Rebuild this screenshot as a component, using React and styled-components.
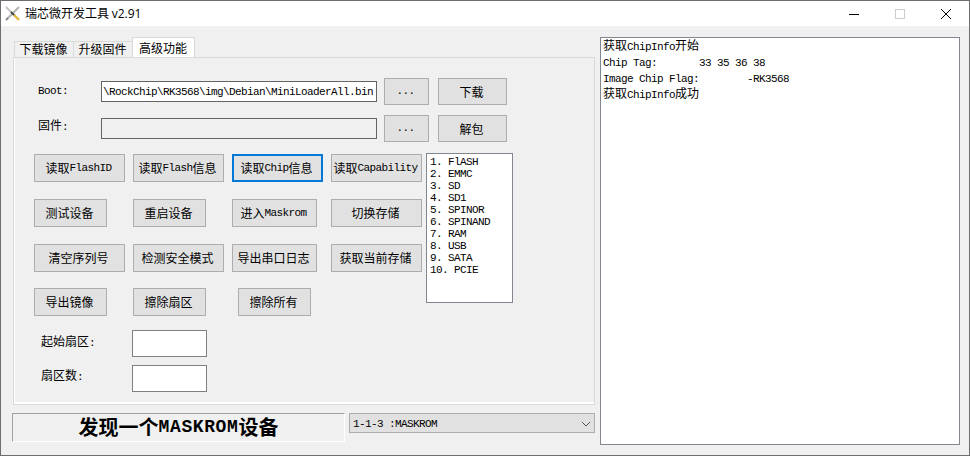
import styled, { createGlobalStyle } from "styled-components";

const GlobalStyle = createGlobalStyle`
    html, body {
        margin: 0;
        padding: 0;
        background: #f0f0f0;
    }
    body {
        font-family: "Noto Sans CJK SC", sans-serif;
        font-size: 12px;
        color: #000;
    }
`;

const latinFont = `"Liberation Mono", "Noto Sans CJK SC", monospace`;

const Window = styled.div`
    width: 970px;
    height: 456px;
    box-sizing: border-box;
    border: 1px solid #6e6e6e;
    display: flex;
    flex-direction: column;
    background: #f0f0f0;
    overflow: hidden;
`;

const TitleBar = styled.header`
    height: 25px;
    flex: none;
    background: #fff;
    display: flex;
    align-items: center;
    padding-left: 3px;
`;

const AppIcon = styled.svg`
    width: 17px;
    height: 17px;
    flex: none;
`;

const TitleText = styled.span`
    margin-left: 4px;
    line-height: 16px;
    white-space: pre;
`;

const Version = styled.span`
    font-family: "Open Sans", "Noto Sans", sans-serif;
    font-size: 12px;
`;

const WindowControls = styled.div`
    margin-left: auto;
    display: flex;
    height: 25px;
    padding-right: 17px;
    gap: 34px;
    align-items: center;
`;

const ControlIcon = styled.svg`
    width: 12px;
    height: 12px;
    display: block;
`;

const Body = styled.div`
    flex: 1;
    display: flex;
    padding: 11px 0 0 11px;
    min-height: 0;
`;

const LeftColumn = styled.div`
    width: 583px;
    flex: none;
    display: flex;
    flex-direction: column;
`;

const TabBar = styled.div`
    height: 20px;
    flex: none;
    display: flex;
    align-items: flex-end;
    padding-left: 2px;
`;

const Tab = styled.div`
    box-sizing: border-box;
    width: ${(p) => (p.$active ? 63 : 60)}px;
    height: ${(p) => (p.$active ? 20 : 16)}px;
    margin-left: ${(p) => (p.$first ? 0 : -1)}px;
    padding: 0 1px ${(p) => (p.$active ? 0 : 2)}px 0;
    background: ${(p) => (p.$active ? "#fff" : "#f0f0f0")};
    border: 1px solid #d9d9d9;
    border-bottom: none;
    display: flex;
    align-items: center;
    justify-content: center;
    line-height: 14px;
`;

const Panel = styled.section`
    box-sizing: border-box;
    width: 582px;
    height: 348px;
    margin-left: 1px;
    flex: none;
    border: 1px solid #d9d9d9;
    box-shadow: inset 1px 0 0 #fff, inset 0 -2px 0 #fff;
    padding-top: 20px;
`;

const FormRow = styled.div`
    display: flex;
    align-items: center;
    height: 27px;
    padding-left: 24px;
    margin-top: ${(p) => p.$top || 0}px;
`;

const FieldLabel = styled.label`
    width: 63px;
    flex: none;
    line-height: 16px;
    margin-top: ${(p) => (p.$cjk ? -7 : -5)}px;
`;

const PathInput = styled.input`
    box-sizing: border-box;
    width: 276px;
    height: 21px;
    padding: 0 1px;
    border: 1px solid #646464;
    border-radius: 0;
    outline: none;
    font-family: ${latinFont};
    font-size: 11px;
    letter-spacing: -0.6px;
    color: #000;
    background: ${(p) => (p.disabled ? "#f0f0f0" : "#fff")};
`;

const Button = styled.button`
    box-sizing: border-box;
    width: ${(p) => p.$w}px;
    height: ${(p) => p.$h || 28}px;
    margin-left: ${(p) => p.$left || 0}px;
    padding: 0 2px 0 0;
    flex: none;
    background: #e1e1e1;
    border: ${(p) => (p.$focused ? "2px solid #0078d7" : "1px solid #adadad")};
    border-radius: 0;
    font-family: inherit;
    font-size: 12px;
    line-height: 14px;
    color: #000;
    white-space: pre;
    display: flex;
    align-items: center;
    justify-content: center;
`;

const ActionGrid = styled.div`
    display: grid;
    grid-template-columns: 99px 99px 99px 95px 87px;
    grid-template-rows: 45px 45px 44px 28px;
    margin: 12px 0 0 20px;
    justify-items: start;
    align-items: start;
`;

const StorageList = styled.div`
    grid-column: 5;
    grid-row: 1 / span 4;
    box-sizing: border-box;
    width: 87px;
    height: 150px;
    margin-top: -1px;
    padding: 2px 3px 0;
    background: #fff;
    border: 1px solid #82878f;
    font-family: ${latinFont};
    font-size: 11px;
    letter-spacing: -0.6px;
    line-height: 12px;
    white-space: pre;
`;

const SectorRows = styled.div`
    margin-top: 14px;
    padding-left: 27px;
    display: flex;
    flex-direction: column;
    gap: 8px;
`;

const SectorRow = styled.div`
    display: flex;
    align-items: center;
    height: 27px;
`;

const SectorLabel = styled.label`
    width: 91px;
    flex: none;
    line-height: 16px;
    margin-top: ${(p) => (p.$up ? -7 : -5)}px;
`;

const SectorInput = styled.input`
    box-sizing: border-box;
    width: 75px;
    height: 27px;
    padding: 0 2px;
    border: 1px solid #808080;
    border-radius: 0;
    outline: none;
    background: #fff;
`;

const StatusRow = styled.div`
    display: flex;
    margin-top: 8px;
    align-items: flex-start;
`;

const StatusBox = styled.div`
    box-sizing: border-box;
    width: 333px;
    height: 29px;
    flex: none;
    padding-bottom: 2px;
    border-top: 1px solid #a0a0a0;
    border-left: 1px solid #a0a0a0;
    border-right: 1px solid #fff;
    border-bottom: 1px solid #fff;
    display: flex;
    align-items: center;
    justify-content: center;
    font-size: 20px;
    font-weight: 700;
    line-height: 24px;
    white-space: pre;
`;

const StatusLatin = styled.span`
    font-family: ${latinFont};
    font-size: 18px;
    font-weight: 700;
    letter-spacing: 0.6px;
    line-height: 1;
`;

const Combo = styled.div`
    box-sizing: border-box;
    width: 246px;
    height: 20px;
    margin-left: 4px;
    flex: none;
    background: #e1e1e1;
    border: 1px solid #adadad;
    display: flex;
    align-items: center;
    justify-content: space-between;
    padding: 1px 3px 0;
    font-family: ${latinFont};
    font-size: 11px;
    letter-spacing: -0.6px;
    white-space: pre;
`;

const Chevron = styled.svg`
    width: 10px;
    height: 6px;
    flex: none;
`;

const Memo = styled.div`
    box-sizing: border-box;
    width: 360px;
    height: 408px;
    margin-left: 5px;
    flex: none;
    background: #fff;
    border: 1px solid #82878f;
    padding: 0 2px;
    white-space: pre;
`;

const MemoLine = styled.div`
    height: 16px;
    line-height: 13px;
`;

const Latin = styled.span`
    font-family: ${latinFont};
    font-size: 11px;
    letter-spacing: -0.6px;
    line-height: 1;
`;

// SimSun-style runs: ascii goes half width, everything else stays 12px
function Mixed({ children }) {
    return children
        .split(/([\x00-\x7f]+)/)
        .filter(Boolean)
        .map((run, i) =>
            /^[\x00-\x7f]/.test(run) ? <Latin key={i}>{run}</Latin> : run
        );
}

const actions = [
    { label: "读取FlashID", w: 91 },
    { label: "读取Flash信息", w: 91 },
    { label: "读取Chip信息", w: 91, focused: true },
    { label: "读取Capability", w: 91 },
    { label: "测试设备", w: 73 },
    { label: "重启设备", w: 73 },
    { label: "进入Maskrom", w: 85 },
    { label: "切换存储", w: 91 },
    { label: "清空序列号", w: 91 },
    { label: "检测安全模式", w: 91 },
    { label: "导出串口日志", w: 85 },
    { label: "获取当前存储", w: 91 },
    { label: "导出镜像", w: 73 },
    { label: "擦除扇区", w: 73 },
    { label: "擦除所有", w: 73, left: 6 },
];

const storages = [
    "1. FlASH",
    "2. EMMC",
    "3. SD",
    "4. SD1",
    "5. SPINOR",
    "6. SPINAND",
    "7. RAM",
    "8. USB",
    "9. SATA",
    "10. PCIE",
];

const logLines = [
    "获取ChipInfo开始",
    "Chip Tag:       33 35 36 38",
    "Image Chip Flag:        -RK3568",
    "获取ChipInfo成功",
];

export default function App() {
    return (
        <>
            <GlobalStyle />
            <Window>
                <TitleBar>
                    <AppIcon viewBox="0 0 17 17">
                        <path d="M2 2 L8 8" stroke="#c4c4c4" strokeWidth="2" />
                        <path d="M15 2 L3 14" stroke="#b4b4b4" strokeWidth="2" />
                        <path d="M2 15 L4 13" stroke="#8a8a8a" strokeWidth="2" />
                        <path d="M7 7 L11 11" stroke="#4a4a4a" strokeWidth="2" />
                        <path d="M10 10 L15 15" stroke="#e2b93b" strokeWidth="2.4" />
                    </AppIcon>
                    <TitleText>
                        瑞芯微开发工具 <Version>v2.91</Version>
                    </TitleText>
                    <WindowControls>
                        <ControlIcon viewBox="0 0 12 12">
                            <path d="M1 6.5 H11" stroke="#000" fill="none" />
                        </ControlIcon>
                        <ControlIcon viewBox="0 0 12 12">
                            <rect x="1.5" y="1.5" width="9" height="9" stroke="#cccccc" fill="none" />
                        </ControlIcon>
                        <ControlIcon viewBox="0 0 12 12">
                            <path d="M1 1 L11 11 M11 1 L1 11" stroke="#000" fill="none" />
                        </ControlIcon>
                    </WindowControls>
                </TitleBar>
                <Body>
                    <LeftColumn>
                        <TabBar>
                            <Tab $first>下载镜像</Tab>
                            <Tab>升级固件</Tab>
                            <Tab $active>高级功能</Tab>
                        </TabBar>
                        <Panel>
                            <FormRow>
                                <FieldLabel>
                                    <Mixed>Boot:</Mixed>
                                </FieldLabel>
                                <PathInput
                                    readOnly
                                    value="\RockChip\RK3568\img\Debian\MiniLoaderAll.bin"
                                />
                                <Button $w={45} $h={27} $left={7}>
                                    <Mixed>...</Mixed>
                                </Button>
                                <Button $w={69} $h={27} $left={9}>
                                    下载
                                </Button>
                            </FormRow>
                            <FormRow $top={10}>
                                <FieldLabel $cjk>
                                    固件<Mixed>:</Mixed>
                                </FieldLabel>
                                <PathInput disabled value="" />
                                <Button $w={45} $h={27} $left={7}>
                                    <Mixed>...</Mixed>
                                </Button>
                                <Button $w={69} $h={27} $left={9}>
                                    解包
                                </Button>
                            </FormRow>
                            <ActionGrid>
                                {actions.map((a) => (
                                    <Button
                                        key={a.label}
                                        $w={a.w}
                                        $left={a.left}
                                        $focused={a.focused}
                                    >
                                        <Mixed>{a.label}</Mixed>
                                    </Button>
                                ))}
                                <StorageList>
                                    {storages.map((s) => (
                                        <div key={s}>{s}</div>
                                    ))}
                                </StorageList>
                            </ActionGrid>
                            <SectorRows>
                                <SectorRow>
                                    <SectorLabel>
                                        起始扇区<Mixed>:</Mixed>
                                    </SectorLabel>
                                    <SectorInput />
                                </SectorRow>
                                <SectorRow>
                                    <SectorLabel $up>
                                        扇区数<Mixed>:</Mixed>
                                    </SectorLabel>
                                    <SectorInput />
                                </SectorRow>
                            </SectorRows>
                        </Panel>
                        <StatusRow>
                            <StatusBox>
                                发现一个<StatusLatin>MASKROM</StatusLatin>设备
                            </StatusBox>
                            <Combo>
                                <span>1-1-3 :MASKROM</span>
                                <Chevron viewBox="0 0 10 6">
                                    <path d="M1 1 L5 5 L9 1" stroke="#555" fill="none" />
                                </Chevron>
                            </Combo>
                        </StatusRow>
                    </LeftColumn>
                    <Memo>
                        {logLines.map((line) => (
                            <MemoLine key={line}>
                                <Mixed>{line}</Mixed>
                            </MemoLine>
                        ))}
                    </Memo>
                </Body>
            </Window>
        </>
    );
}
